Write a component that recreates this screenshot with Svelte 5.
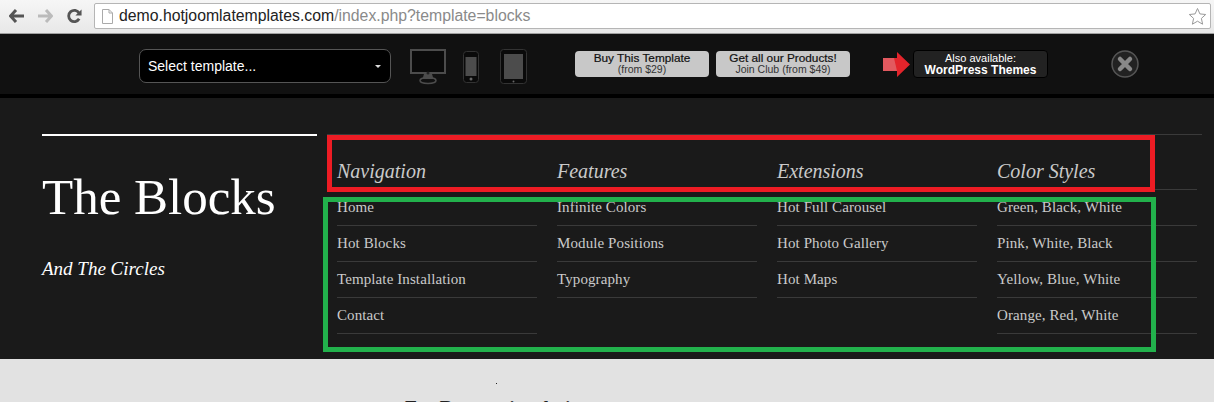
<script>
  const columns = [
    { title: 'Navigation', items: ['Home', 'Hot Blocks', 'Template Installation', 'Contact'] },
    { title: 'Features', items: ['Infinite Colors', 'Module Positions', 'Typography'] },
    { title: 'Extensions', items: ['Hot Full Carousel', 'Hot Photo Gallery', 'Hot Maps'] },
    { title: 'Color Styles', items: ['Green, Black, White', 'Pink, White, Black', 'Yellow, Blue, White', 'Orange, Red, White'] }
  ]
</script>

<div class="page">
  <div class="chrome">
    <div class="nav">
      <svg width="15" height="14" viewBox="0 0 15 14"><path d="M7 1 1.500 7 7 13M2 7h13" fill="none" stroke="#555" stroke-width="3"/></svg>
      <svg width="15" height="14" viewBox="0 0 15 14"><path d="M8 1l5.500 6L8 13M13 7H0" fill="none" stroke="#bbb" stroke-width="3"/></svg>
      <svg width="15" height="16" viewBox="0 0 16 16"><path d="M13 11a6 6 0 1 1 0-6" fill="none" stroke="#555" stroke-width="3"/><path d="M15.500 1v6.500H9z" fill="#555"/></svg>
    </div>
    <div class="omnibox">
      <svg width="11" height="15" viewBox="0 0 11 15"><path d="M.5.500h6.500l3.500 3.500v10.500H.5zM7 .5V4h3.500" fill="#fff" stroke="#aaa"/></svg>
      <span class="url"><span class="host">demo.hotjoomlatemplates.com</span>/index.php?template=blocks</span>
      <svg class="star" width="19" height="19" viewBox="0 0 19 19"><path d="M9.500 1.500l2.400 5.400 5.800.6-4.300 3.900 1.200 5.800-5.100-3-5.100 3 1.200-5.800L1.300 7.500l5.800-.6z" fill="#fff" stroke="#999"/></svg>
    </div>
  </div>

  <div class="toolbar">
    <div class="select">
      <span>Select template...</span>
      <i class="caret"></i>
    </div>
    <div class="devices">
      <svg width="36" height="36" viewBox="0 0 36 36">
        <rect x="1" y="1" width="34" height="23" fill="#0a0a0a" stroke="#4c4c4c" stroke-width="2"/>
        <path d="M14 25h8l1.500 5h-11z" fill="#4c4c4c"/>
        <circle cx="18" cy="24" r="1.500" fill="#222"/>
        <ellipse cx="18" cy="31.500" rx="8" ry="3" fill="none" stroke="#4c4c4c" stroke-width="1.500"/>
      </svg>
      <svg width="16" height="32" viewBox="0 0 16 32">
        <rect x=".5" y=".5" width="15" height="31" rx="3" fill="#0a0a0a" stroke="#333"/>
        <rect x="2.500" y="6" width="11" height="19" fill="#4c4c4c"/>
        <circle cx="8" cy="28" r="1.500" fill="#666"/>
      </svg>
      <svg class="tablet" width="27" height="35" viewBox="0 0 27 35">
        <rect x=".5" y=".5" width="26" height="34" rx="3" fill="#0a0a0a" stroke="#333"/>
        <rect x="4" y="5" width="19" height="25" fill="#4c4c4c"/>
        <circle cx="13.500" cy="32.500" r="1" fill="#666"/>
      </svg>
    </div>
    <div class="buy">
      <a class="btn"><b>Buy This Template</b><span>(from $29)</span></a>
      <a class="btn"><b>Get all our Products!</b><span>Join Club (from $49)</span></a>
    </div>
    <svg class="arrow" width="27" height="25" viewBox="0 0 27 25">
      <path d="M0 6h14V0l13 12.500L14 25v-6H0z" fill="#e3242b"/>
      <path d="M0 6h11l3 13H0z" fill="#e2595f"/>
    </svg>
    <a class="also"><span>Also available:</span><b>WordPress Themes</b></a>
    <svg class="close" width="28" height="28" viewBox="0 0 28 28">
      <circle cx="14" cy="14" r="13" fill="#222" stroke="#555" stroke-width="1.500"/>
      <path d="M9 9l10 10M19 9 9 19" stroke="#888" stroke-width="4.500" stroke-linecap="round"/>
    </svg>
  </div>

  <header class="header">
    <div class="brand">
      <h1>The Blocks</h1>
      <p>And The Circles</p>
    </div>
    <div class="menus">
      {#each columns as col}
        <div class="col">
          <h3>{col.title}</h3>
          <ul>
            {#each col.items as item}
              <li>{item}</li>
            {/each}
          </ul>
        </div>
      {/each}
    </div>
    <div class="mark red"></div>
    <div class="mark green"></div>
  </header>

  <main class="content">
    <i class="dot"></i>
    <h2>For Responsive design</h2>
  </main>
</div>

<style>
  :global(body) { overflow: hidden; background: #e2e2e2; }
  .page { height: 402px; overflow: hidden; font-family: "Liberation Sans", Arial, sans-serif; }

  .chrome { height: 34px; box-sizing: border-box; display: flex; align-items: center; padding: 0 3px 1px 9px; background: linear-gradient(#f6f6f6, #e8e8e8); border-bottom: 1px solid #a0a0a0; }
  .nav { display: flex; align-items: center; gap: 14px; margin-right: 12px; }
  .omnibox { flex: 1; height: 26px; box-sizing: border-box; display: flex; align-items: center; gap: 6px; padding: 0 3px 0 7px; background: #fff; border: 1px solid #b5b5b5; border-radius: 2px; }
  .url { font-size: 15.800px; color: #8a8a8a; }
  .host { color: #222; }
  .star { margin-left: auto; }

  .toolbar { height: 60px; display: flex; align-items: center; padding-left: 139px; background: #111; border-bottom: 4px solid #000; }
  .select { width: 252px; height: 34px; margin-top: 4px; box-sizing: border-box; display: flex; align-items: center; justify-content: space-between; padding: 0 9px 0 8px; background: #000; border: 1px solid #555; border-radius: 7px; color: #fff; font-size: 14px; }
  .caret { border: 3px solid transparent; border-top-color: #ddd; border-bottom: 0; }
  .devices { display: flex; align-items: center; gap: 17px; margin: 5px 48px 0 19px; }
  .devices svg { display: block; }
  .tablet { margin-left: 4px; }
  .buy { display: flex; gap: 7px; }
  .btn { width: 134px; height: 26px; display: flex; flex-direction: column; align-items: center; justify-content: center; background: #c8c8c8; border-radius: 4px; color: #111; font-size: 11.800px; line-height: 11px; }
  .btn b { font-weight: normal; -webkit-text-stroke: .2px #111; }
  .btn span { color: #333; font-size: 10.500px; }
  .arrow { margin-left: 33px; flex: none; }
  .also { width: 135px; height: 28px; margin-left: 3px; box-sizing: border-box; display: flex; flex-direction: column; align-items: center; justify-content: center; background: #222; border: 1px solid #000; border-radius: 4px; color: #fff; font-size: 11px; line-height: 12px; }
  .also b { font-size: 12px; }
  .close { margin-left: 63px; flex: none; }

  .header { position: relative; height: 261px; display: flex; background: #1a1a1a; font-family: "Liberation Serif", Georgia, serif; }
  .brand { width: 275px; margin: 36px 0 0 42px; box-sizing: border-box; border-top: 2px solid #fff; color: #fff; }
  h1 { margin: 31px 0 0; font-size: 51px; line-height: 60px; font-weight: normal; }
  .brand p { margin: 30px 0 0; font-size: 19px; line-height: 24px; font-style: italic; }
  .menus { width: 875px; margin: 36px 0 0 10px; padding-left: 10px; box-sizing: border-box; display: grid; grid-template-columns: repeat(4, 200px); column-gap: 20px; align-content: start; border-top: 1px solid #3a3a3a; color: #cacaca; }
  h3 { margin: 0; height: 55px; box-sizing: border-box; padding-top: 23px; font-size: 20px; line-height: 26px; font-weight: normal; font-style: italic; border-bottom: 1px solid #3a3a3a; }
  ul { margin: 0; padding: 0; list-style: none; }
  li { height: 36px; box-sizing: border-box; padding-top: 7px; font-size: 15px; line-height: 20px; letter-spacing: .1px; border-bottom: 1px solid #3a3a3a; }

  .mark { position: absolute; box-sizing: border-box; border: 5px solid; }
  .red { left: 327px; top: 37px; width: 828px; height: 57px; border-color: #ed1c24; }
  .green { left: 323px; top: 99px; width: 833px; height: 155px; border-color: #22b14c; }

  .content { position: relative; height: 43px; background: #e2e2e2; }
  .dot { position: absolute; left: 496px; top: 24px; width: 1px; height: 1px; background: #222; }
  h2 { position: absolute; left: 405px; top: 37px; margin: 0; font-family: "Liberation Serif", Georgia, serif; font-size: 19.500px; line-height: 24px; color: #222; white-space: nowrap; }
</style>
